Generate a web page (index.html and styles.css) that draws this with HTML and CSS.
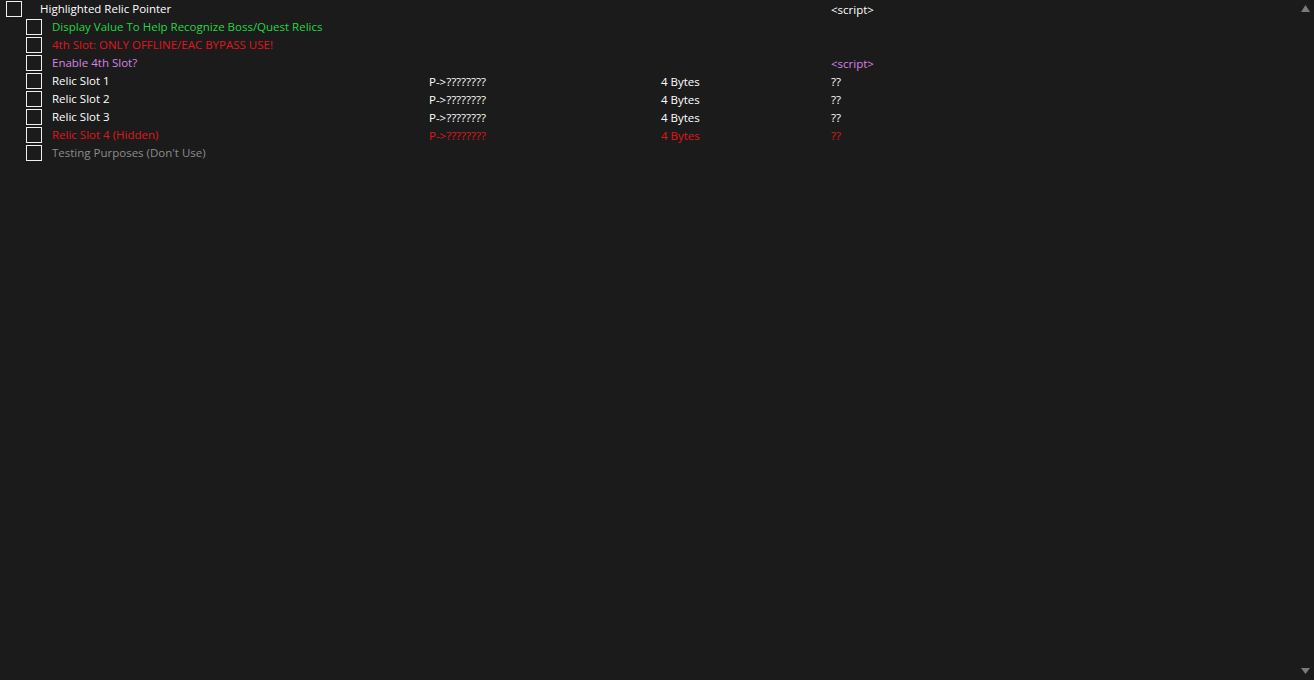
FILE: index.html
```html
<!DOCTYPE html>
<html>
<head>
<meta charset="utf-8">
<link rel="stylesheet" href="styles.css">
</head>
<body>
<div class="app">
  <div class="list">
    <div class="row parent">
      <div class="desc"><span class="box"></span><span class="label">Highlighted Relic Pointer</span></div>
      <div class="addr"></div>
      <div class="type"></div>
      <div class="val">&lt;script&gt;</div>
    </div>
    <div class="row child green">
      <div class="desc"><span class="box"></span><span class="label">Display Value To Help Recognize Boss/Quest Relics</span></div>
      <div class="addr"></div><div class="type"></div><div class="val"></div>
    </div>
    <div class="row child red">
      <div class="desc"><span class="box"></span><span class="label">4th Slot: ONLY OFFLINE/EAC BYPASS USE!</span></div>
      <div class="addr"></div><div class="type"></div><div class="val"></div>
    </div>
    <div class="row child violet">
      <div class="desc"><span class="box"></span><span class="label">Enable 4th Slot?</span></div>
      <div class="addr"></div><div class="type"></div><div class="val">&lt;script&gt;</div>
    </div>
    <div class="row child">
      <div class="desc"><span class="box"></span><span class="label">Relic Slot 1</span></div>
      <div class="addr">P-&gt;????????</div><div class="type">4 Bytes</div><div class="val">??</div>
    </div>
    <div class="row child">
      <div class="desc"><span class="box"></span><span class="label">Relic Slot 2</span></div>
      <div class="addr">P-&gt;????????</div><div class="type">4 Bytes</div><div class="val">??</div>
    </div>
    <div class="row child">
      <div class="desc"><span class="box"></span><span class="label">Relic Slot 3</span></div>
      <div class="addr">P-&gt;????????</div><div class="type">4 Bytes</div><div class="val">??</div>
    </div>
    <div class="row child red">
      <div class="desc"><span class="box"></span><span class="label">Relic Slot 4 (Hidden)</span></div>
      <div class="addr">P-&gt;????????</div><div class="type">4 Bytes</div><div class="val">??</div>
    </div>
    <div class="row child gray">
      <div class="desc"><span class="box"></span><span class="label">Testing Purposes (Don't Use)</span></div>
      <div class="addr"></div><div class="type"></div><div class="val"></div>
    </div>
  </div>
  <div class="scrollbar">
    <svg class="arrow" width="17" height="17" viewBox="0 0 17 17"><polygon points="4,12 13,12 8.5,5" fill="#7a7a7a"/></svg>
    <svg class="arrow" width="17" height="17" viewBox="0 0 17 17"><polygon points="4,5 13,5 8.5,11" fill="#7a7a7a"/></svg>
  </div>
</div>
</body>
</html>
```

FILE: styles.css
```css
html, body {
  margin: 0;
  padding: 0;
  background: #1b1b1b;
}
.app {
  display: flex;
  width: 1314px;
  height: 680px;
  background: #1b1b1b;
  font-family: "Open Sans", "Liberation Sans", sans-serif;
  font-size: 11.5px;
  color: #ffffff;
}
.list {
  flex: 1;
  display: flex;
  flex-direction: column;
}
.row {
  display: grid;
  grid-template-columns: 429px 232px 170px 1fr;
  height: 18px;
  align-items: center;
  white-space: nowrap;
}
.desc {
  display: flex;
  align-items: center;
}
.box {
  width: 14px;
  height: 14px;
  border: 1px solid #f0f0f0;
  flex: none;
}
.parent .desc { padding-left: 6px; }
.parent .box { margin-right: 18px; }
.child .desc { padding-left: 26px; }
.child .box { margin-right: 10px; }
.label { line-height: 18px; }
.green { color: #24d645; }
.red { color: #e0161b; }
.violet { color: #d882e2; }
.gray { color: #8c8c8c; }
.scrollbar {
  width: 17px;
  display: flex;
  flex-direction: column;
  justify-content: space-between;
}
.arrow { display: block; }
```
